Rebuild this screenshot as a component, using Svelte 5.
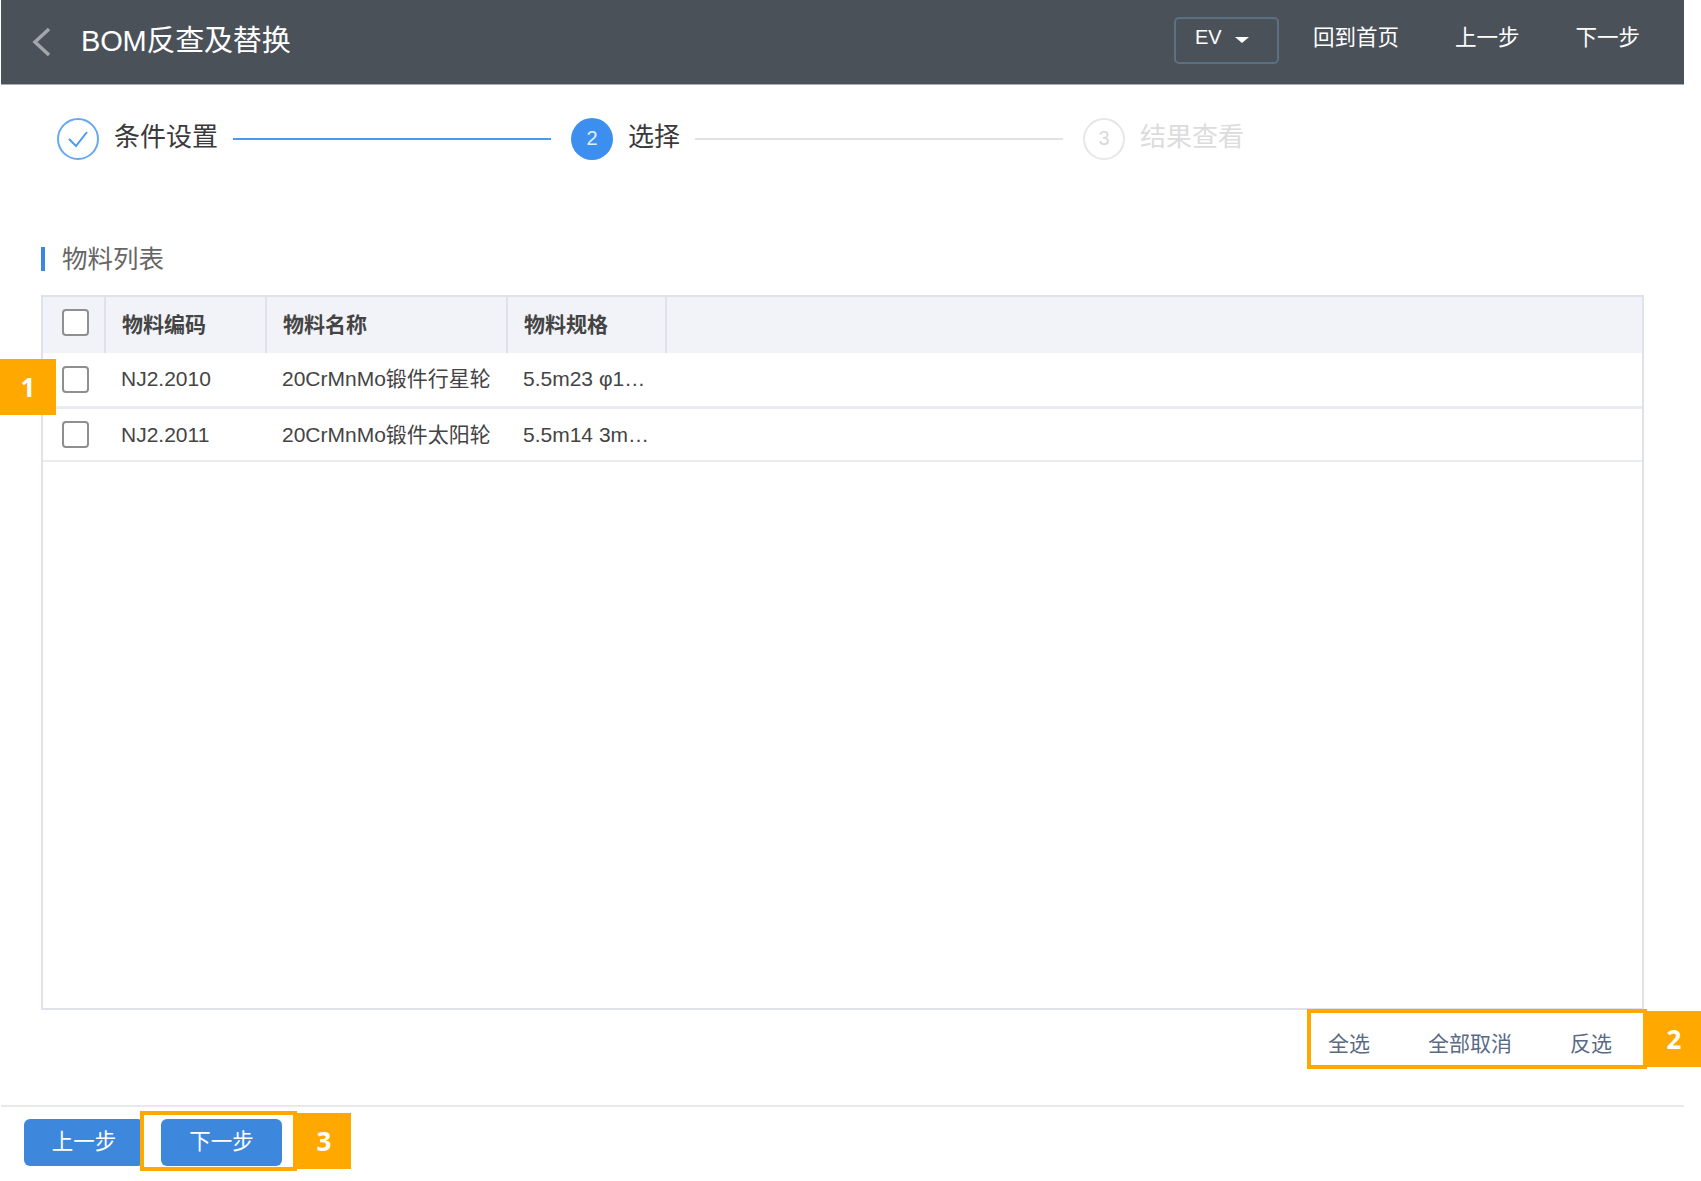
<script>
  const columns = [
    { label: '物料编码', w: 161 },
    { label: '物料名称', w: 241 },
    { label: '物料规格', w: 159 }
  ];
  const rows = [
    { code: 'NJ2.2010', name: '20CrMnMo锻件行星轮', spec: '5.5m23 φ1…' },
    { code: 'NJ2.2011', name: '20CrMnMo锻件太阳轮', spec: '5.5m14 3m…' }
  ];
</script>

<div class="page">
  <div class="screen">
    <header class="topbar">
      <svg class="back" width="20" height="30" viewBox="0 0 20 30">
        <path d="M17 2 L3 15 L17 28" fill="none" stroke="#a3a7ab" stroke-width="3.5" />
      </svg>
      <h1>BOM反查及替换</h1>
      <div class="actions">
        <div class="select">EV <span class="caret"></span></div>
        <a class="first" href="#home">回到首页</a>
        <a href="#prev">上一步</a>
        <a href="#next">下一步</a>
      </div>
    </header>

    <div class="steps">
      <span class="circle done">
        <svg width="24" height="20" viewBox="0 0 24 20">
          <path d="M3 10 L10 17 L21 3" fill="none" stroke="#4a9af0" stroke-width="2" />
        </svg>
      </span>
      <span class="step-label">条件设置</span>
      <span class="line blue"></span>
      <span class="circle current">2</span>
      <span class="step-label">选择</span>
      <span class="line grey"></span>
      <span class="circle todo">3</span>
      <span class="step-label muted">结果查看</span>
    </div>

    <div class="section-title"><span>物料列表</span></div>

    <div class="table">
      <div class="thead">
        <div class="cell check head-check"><span class="box"></span></div>
        {#each columns as col}
          <div class="cell th" style="width: {col.w}px">{col.label}</div>
        {/each}
      </div>
      {#each rows as row, i}
        <div class="row" class:first-row={i === 0}>
          <div class="cell check"><span class="box"></span></div>
          <div class="cell td" style="width: {columns[0].w}px">{row.code}</div>
          <div class="cell td" style="width: {columns[1].w}px">{row.name}</div>
          <div class="cell td" style="width: {columns[2].w}px">{row.spec}</div>
        </div>
      {/each}
    </div>

    <div class="links">
      <a href="#all">全选</a>
      <a href="#none">全部取消</a>
      <a href="#invert">反选</a>
    </div>

    <footer class="footer">
      <button>上一步</button>
      <button class="next">下一步</button>
    </footer>
  </div>

  <!-- 标注 -->
  <div class="mark num1">1</div>
  <div class="frame frame2"></div>
  <div class="mark num2">2</div>
  <div class="frame frame3"></div>
  <div class="mark num3">3</div>
</div>

<style>
  :global(body) {
    margin: 0;
    background: #fff;
  }

  .page {
    position: relative;
    width: 1701px;
    height: 1181px;
    overflow: hidden;
    font-family: "Liberation Sans", "Noto Sans CJK SC", sans-serif;
    color: #333;
  }

  .screen {
    width: 1683px;
    margin-left: 1px;
  }

  .topbar {
    box-sizing: border-box;
    height: 85px;
    background: #4b5159;
    border-bottom: 1px solid #a9acaf;
    display: flex;
    align-items: center;
    padding-left: 31px;
    color: #fff;
  }

  .back {
    margin-right: 29px;
  }

  h1 {
    margin: 0 0 2px;
    font-size: 29px;
    line-height: 1.2;
    font-weight: 400;
    letter-spacing: -0.2px;
  }

  .actions {
    margin-left: auto;
    display: flex;
    align-items: center;
    font-size: 21.5px;
    padding-right: 44px;
    margin-top: -4px;
  }

  .actions a {
    color: #fff;
    text-decoration: none;
    margin-left: 56px;
    margin-bottom: 2px;
    line-height: 1.2;
  }

  .actions a.first {
    margin-left: 34px;
  }

  .select {
    box-sizing: border-box;
    width: 105px;
    height: 47px;
    border: 2px solid #5d6f82;
    border-radius: 5px;
    display: flex;
    align-items: center;
    padding-left: 19px;
    padding-bottom: 5px;
    font-size: 20px;
    gap: 13px;
  }

  .caret {
    width: 0;
    height: 0;
    border-left: 7px solid transparent;
    border-right: 7px solid transparent;
    border-top: 6px solid #fff;
    margin-top: 4px;
  }

  .steps {
    display: flex;
    align-items: center;
    height: 41px;
    margin-top: 33px;
    padding-left: 56px;
  }

  .circle {
    box-sizing: border-box;
    flex: none;
    width: 42px;
    height: 42px;
    border-radius: 50%;
    display: flex;
    align-items: center;
    justify-content: center;
    font-size: 20px;
  }

  .done {
    border: 2px solid #66a9f2;
  }

  .current {
    background: #3c8fee;
    color: #e4eefb;
  }

  .todo {
    border: 2px solid #e6e6e6;
    color: #d9d9d9;
  }

  .step-label {
    font-size: 26px;
    line-height: 1.2;
    margin: 0 15px 2px 15px;
    white-space: nowrap;
    color: #3a3a3a;
  }

  .muted {
    color: #dcdcdc;
  }

  .line {
    height: 2px;
  }

  .line.blue {
    width: 318px;
    background: #4a9af0;
    margin-right: 20px;
  }

  .line.grey {
    width: 368px;
    background: #e2e2e2;
    margin-right: 20px;
  }

  .section-title {
    margin: 88px 0 0 40px;
    height: 24px;
    border-left: 4px solid #3b86e0;
    padding-left: 17px;
    display: flex;
    align-items: center;
    font-size: 25.5px;
    line-height: 1.2;
    color: #666;
  }

  .table {
    box-sizing: border-box;
    width: 1603px;
    height: 715px;
    margin: 24px 0 0 40px;
    border: 2px solid #dfe2ec;
  }

  .thead {
    display: flex;
    height: 56px;
    background: #f2f3f8;
  }

  .cell {
    box-sizing: border-box;
    display: flex;
    align-items: center;
    flex: none;
    font-size: 21px;
    line-height: 1.2;
  }

  .check {
    width: 63px;
    padding-left: 19px;
  }

  .head-check {
    border-right: 2px solid #dfe2ec;
    align-items: flex-start;
    padding-top: 12px;
  }

  .box {
    box-sizing: border-box;
    width: 27px;
    height: 27px;
    border: 2px solid #8f8f8f;
    border-radius: 4px;
    background: #fff;
  }

  .th {
    border-right: 2px solid #dfe2ec;
    padding-left: 16px;
    font-weight: 700;
    color: #444;
  }

  .row {
    box-sizing: border-box;
    display: flex;
    height: 53px;
    border-bottom: 2px solid #e9ebf0;
  }

  .first-row {
    height: 56px;
    border-bottom-width: 3px;
    padding-bottom: 1px;
  }

  .td {
    padding-left: 15px;
    color: #444;
    white-space: nowrap;
  }

  .links {
    display: flex;
    justify-content: flex-end;
    height: 97px;
    box-sizing: border-box;
    padding: 21px 72px 0 0;
    gap: 58px;
    font-size: 21px;
    line-height: 1.2;
    border-bottom: 2px solid #e9e9e9;
  }

  .links a {
    color: #5a6a85;
    text-decoration: none;
    height: 26px;
  }

  .footer {
    display: flex;
    gap: 17px;
    padding: 12px 0 0 23px;
  }

  button {
    width: 120px;
    height: 47px;
    border: none;
    border-radius: 6px;
    background: #3d87dd;
    color: #fff;
    font: inherit;
    font-size: 21.5px;
    line-height: 1.2;
    padding: 0;
  }

  .next {
    width: 121px;
  }

  .mark {
    position: absolute;
    width: 54px;
    height: 56px;
    background: #ffa800;
    color: #fff;
    font-family: "Open Sans", sans-serif;
    font-weight: 700;
    font-size: 26px;
    display: flex;
    align-items: center;
    justify-content: center;
  }

  .frame {
    position: absolute;
    box-sizing: border-box;
    border: 4px solid #ffa800;
  }

  .num1 {
    left: 0;
    top: 359px;
    width: 56px;
  }

  .frame2 {
    left: 1307px;
    top: 1009px;
    width: 340px;
    height: 60px;
  }

  .num2 {
    left: 1647px;
    top: 1011px;
  }

  .frame3 {
    left: 140px;
    top: 1111px;
    width: 157px;
    height: 60px;
  }

  .num3 {
    left: 297px;
    top: 1113px;
  }
</style>
